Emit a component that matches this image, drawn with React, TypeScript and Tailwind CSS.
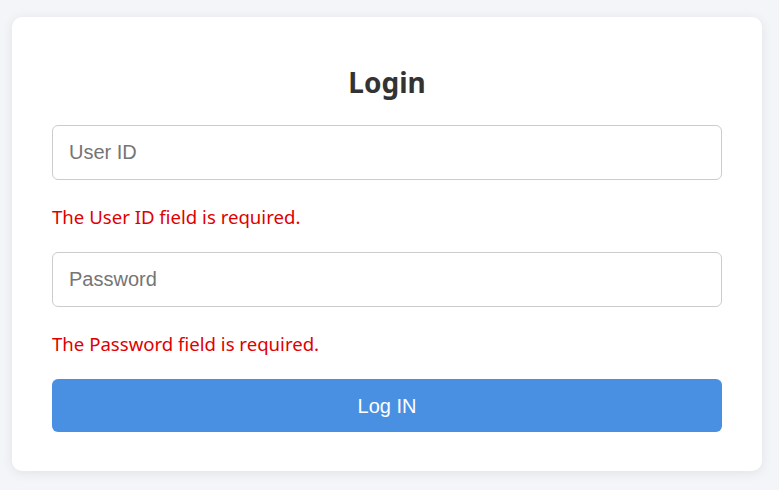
import React, { useState } from "react";

const App: React.FC = () => {
  const [userId, setUserId] = useState("");
  const [password, setPassword] = useState("");

  return (
    <div className="min-h-screen bg-[#f4f5f9] px-3 pt-[17px]">
      <div className="flex w-[750px] flex-col rounded-[10px] bg-white px-10 pt-[46px] pb-[39px] shadow-[0_2px_12px_rgba(0,0,0,0.08)]">
        <h2 className="text-center font-['Noto_Sans',sans-serif] text-[28px] font-bold leading-[38px] text-[#333333]">
          Login
        </h2>

        <input
          type="text"
          placeholder="User ID"
          value={userId}
          onChange={(e) => setUserId(e.target.value)}
          className="mt-[24px] h-[55px] w-full rounded-[6px] border border-[#cccccc] px-4 font-['Liberation_Sans',Arial,sans-serif] text-[20px] text-[#333] placeholder:text-[#757575] outline-none"
        />
        <p className="mt-[25px] font-['Noto_Sans',sans-serif] text-[18.6px] leading-[24px] text-[#e00000]">
          The User ID field is required.
        </p>

        <input
          type="password"
          placeholder="Password"
          value={password}
          onChange={(e) => setPassword(e.target.value)}
          className="mt-[23px] h-[55px] w-full rounded-[6px] border border-[#cccccc] px-4 font-['Liberation_Sans',Arial,sans-serif] text-[20px] text-[#333] placeholder:text-[#757575] outline-none"
        />
        <p className="mt-[25px] font-['Noto_Sans',sans-serif] text-[18.6px] leading-[24px] text-[#e00000]">
          The Password field is required.
        </p>

        <button className="mt-[23px] h-[53px] w-full rounded-[6px] bg-[#4a90e2] font-['Liberation_Sans',Arial,sans-serif] text-[20px] text-white">
          Log IN
        </button>
      </div>
    </div>
  );
};

export default App;
